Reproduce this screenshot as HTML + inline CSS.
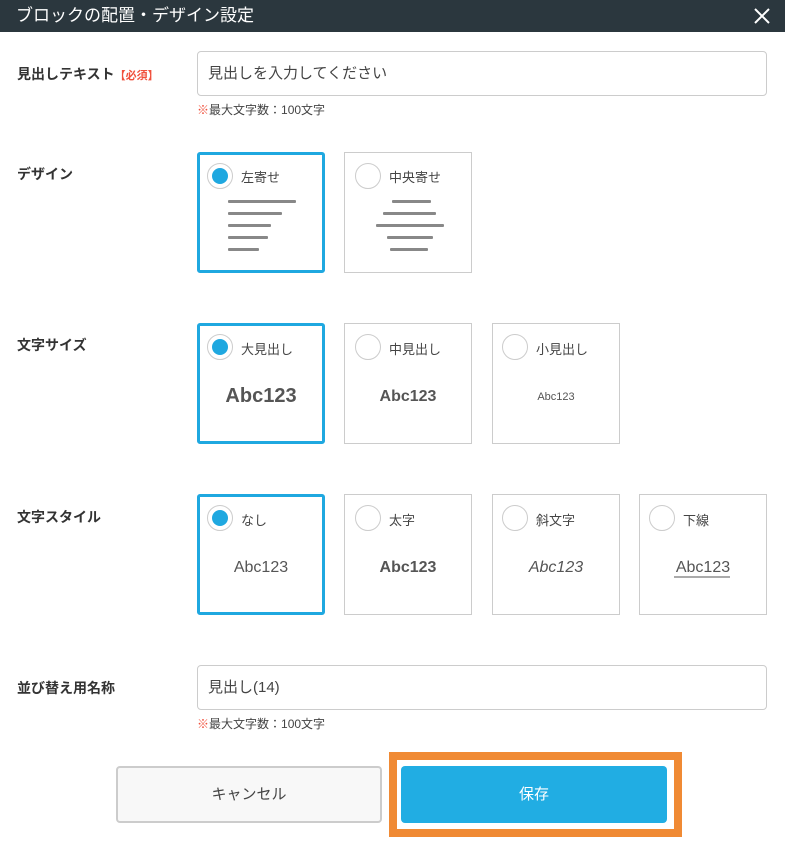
<!DOCTYPE html>
<html><head><meta charset="utf-8"><style>
*{box-sizing:border-box;margin:0;padding:0}
body{width:785px;height:841px;background:#fff;position:relative;overflow:hidden;font-family:"Liberation Sans","Noto Sans CJK JP",sans-serif;color:#444}
.a{position:absolute}
.hd{left:0;top:0;width:785px;height:32px;background:#2b373e;color:#fff;font-size:17px;line-height:31px;padding-left:16px}
.lbl{left:17px;font-size:14px;font-weight:bold;color:#333}
.inp{left:197px;width:570px;height:45px;border:1px solid #ccc;border-radius:4px;font-size:15px;line-height:43px;padding-left:10px;color:#444}
.note{left:197px;font-size:12px;color:#444}
.note span{color:#f0503c}
.card{border:1px solid #ccc;width:128px;height:121px}
.card.sel{border:3px solid #1fa8e0;border-radius:3px}
.rad{width:26px;height:26px;border-radius:50%;border:1px solid #ccc;background:#fff}
.dot{width:16px;height:16px;border-radius:50%;background:#1fa8e0;left:4px;top:4px}
.rl{font-size:13px;color:#444}
.ln{height:3px;background:#888;border-radius:1px}
.sm{font-size:17px;color:#555;text-align:center;width:128px}
</style></head><body>
<div class="a hd">ブロックの配置・デザイン設定</div>
<svg class="a" style="left:753px;top:7px" width="18" height="18" viewBox="0 0 18 18"><path d="M2 2L16 16M16 2L2 16" stroke="#fff" stroke-width="2"/></svg>

<div class="a lbl" style="top:64px">見出しテキスト<span style="color:#f0503c;font-size:11px">【必須】</span></div>
<div class="a inp" style="top:51px">見出しを入力してください</div>
<div class="a note" style="top:101px"><span>※</span>最大文字数：100文字</div>

<div class="a lbl" style="top:164px">デザイン</div>
<div class="a card sel" style="left:197px;top:152px"></div>
<div class="a rad" style="left:207px;top:163px"><div class="a dot"></div></div>
<div class="a rl" style="left:241px;top:167px">左寄せ</div>
<div class="a ln" style="left:228px;top:200px;width:68px"></div>
<div class="a ln" style="left:228px;top:212px;width:54px"></div>
<div class="a ln" style="left:228px;top:224px;width:43px"></div>
<div class="a ln" style="left:228px;top:236px;width:40px"></div>
<div class="a ln" style="left:228px;top:248px;width:31px"></div>
<div class="a card" style="left:344px;top:152px"></div>
<div class="a rad" style="left:355px;top:163px"></div>
<div class="a rl" style="left:389px;top:167px">中央寄せ</div>
<div class="a ln" style="left:392px;top:200px;width:39px"></div>
<div class="a ln" style="left:383px;top:212px;width:53px"></div>
<div class="a ln" style="left:376px;top:224px;width:68px"></div>
<div class="a ln" style="left:387px;top:236px;width:46px"></div>
<div class="a ln" style="left:390px;top:248px;width:38px"></div>

<div class="a lbl" style="top:335px">文字サイズ</div>
<div class="a card sel" style="left:197px;top:323px"></div>
<div class="a rad" style="left:207px;top:334px"><div class="a dot"></div></div>
<div class="a rl" style="left:241px;top:339px">大見出し</div>
<div class="a sm" style="left:197px;top:385px;font-size:20px;font-weight:bold">Abc123</div>
<div class="a card" style="left:344px;top:323px"></div>
<div class="a rad" style="left:355px;top:334px"></div>
<div class="a rl" style="left:389px;top:339px">中見出し</div>
<div class="a sm" style="left:344px;top:388px;font-size:16px;font-weight:bold">Abc123</div>
<div class="a card" style="left:492px;top:323px"></div>
<div class="a rad" style="left:502px;top:334px"></div>
<div class="a rl" style="left:536px;top:339px">小見出し</div>
<div class="a sm" style="left:492px;top:391px;font-size:11px">Abc123</div>

<div class="a lbl" style="top:507px">文字スタイル</div>
<div class="a card sel" style="left:197px;top:494px"></div>
<div class="a rad" style="left:207px;top:505px"><div class="a dot"></div></div>
<div class="a rl" style="left:241px;top:510px">なし</div>
<div class="a sm" style="left:197px;top:559px;font-size:16px">Abc123</div>
<div class="a card" style="left:344px;top:494px"></div>
<div class="a rad" style="left:355px;top:505px"></div>
<div class="a rl" style="left:389px;top:510px">太字</div>
<div class="a sm" style="left:344px;top:559px;font-size:16px;font-weight:bold">Abc123</div>
<div class="a card" style="left:492px;top:494px"></div>
<div class="a rad" style="left:502px;top:505px"></div>
<div class="a rl" style="left:536px;top:510px">斜文字</div>
<div class="a sm" style="left:492px;top:559px;font-size:16px;font-style:italic">Abc123</div>
<div class="a card" style="left:639px;top:494px"></div>
<div class="a rad" style="left:649px;top:505px"></div>
<div class="a rl" style="left:683px;top:510px">下線</div>
<div class="a sm" style="left:639px;top:559px;font-size:16px">Abc123</div>
<div class="a" style="left:674px;top:576px;width:56px;height:2px;background:#aaa"></div>

<div class="a lbl" style="top:678px">並び替え用名称</div>
<div class="a inp" style="top:665px">見出し(14)</div>
<div class="a note" style="top:715px"><span>※</span>最大文字数：100文字</div>

<div class="a" style="left:116px;top:766px;width:266px;height:57px;background:#f8f8f8;border:2px solid #ccc;border-radius:4px;text-align:center;line-height:53px;font-size:15px;color:#444">キャンセル</div>
<div class="a" style="left:389px;top:752px;width:293px;height:85px;border:8px solid #f08a34"></div>
<div class="a" style="left:401px;top:766px;width:266px;height:57px;background:#21ade3;border-radius:4px;text-align:center;line-height:57px;font-size:15px;color:#fff">保存</div>
</body></html>
